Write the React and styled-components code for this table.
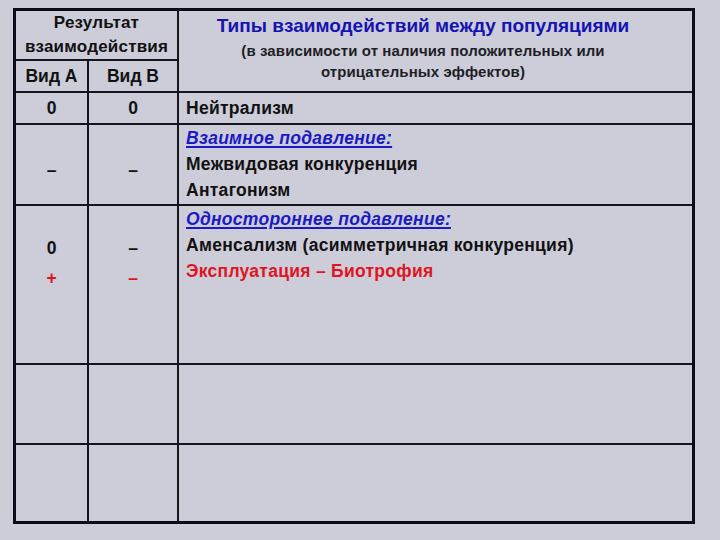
import React from "react";
import styled, { createGlobalStyle } from "styled-components";

const Global = createGlobalStyle`
  html, body {
    margin: 0;
    padding: 0;
    background: #cdccd9;
  }
  body {
    font-family: "Liberation Sans", Arial, sans-serif;
    color: #111;
  }
`;

const Page = styled.div`
  width: 720px;
  height: 540px;
  box-sizing: border-box;
  padding: 8px 0 0 13px;
  background: #cdccd9;
`;

const Table = styled.div`
  box-sizing: border-box;
  width: 682px;
  display: grid;
  grid-template-columns: 71px 88px 1fr;
  grid-template-rows: 48px 30px 30px 79px 157px 78px 76px;
  gap: 2px;
  background: #15151c;
  border: 3px solid #0b0b1c;
`;

const Cell = styled.div`
  background: #cdccd9;
  box-sizing: border-box;
  grid-column: ${(p) => p.$col || "auto"};
  grid-row: ${(p) => p.$row || "auto"};
  display: flex;
  flex-direction: column;
  align-items: ${(p) => (p.$left ? "flex-start" : "center")};
  justify-content: ${(p) => (p.$middle ? "center" : "flex-start")};
  padding: ${(p) => p.$pad || "0"};
  font-weight: bold;
  font-size: 17.5px;
  white-space: nowrap;
`;

const HeadLine = styled.div`
  line-height: 24px;
  font-size: 17px;
  letter-spacing: 0.2px;
  text-align: center;
`;

const Title = styled.div`
  color: #1414b0;
  font-size: 19px;
  line-height: 28px;
  text-align: center;
`;

const Subtitle = styled.div`
  color: #1e1e26;
  font-size: 15px;
  letter-spacing: 0.1px;
  line-height: 21px;
  text-align: center;
`;

const Symbol = styled.div`
  line-height: 30px;
  font-size: 17.5px;
  color: ${(p) => (p.$red ? "#e0141e" : "#111")};
`;

const Text = styled.div`
  line-height: 26px;
  letter-spacing: 0.28px;
  color: ${(p) => p.$color || "#111"};
  font-style: ${(p) => (p.$italic ? "italic" : "normal")};
  text-decoration: ${(p) => (p.$underline ? "underline" : "none")};
  text-decoration-thickness: 1.5px;
  text-underline-offset: 2px;
`;

const BLUE = "#1a1ac4";
const RED = "#e0141e";

export default function App() {
  return (
    <>
      <Global />
      <Page>
        <Table>
          <Cell $col="1 / 3" $row="1">
            <HeadLine>Результат</HeadLine>
            <HeadLine>взаимодействия</HeadLine>
          </Cell>
          <Cell $col="3" $row="1 / 3" $pad="1px 25px 0 0">
            <Title>Типы взаимодействий между популяциями</Title>
            <Subtitle>(в зависимости от наличия положительных или</Subtitle>
            <Subtitle>отрицательных эффектов)</Subtitle>
          </Cell>
          <Cell $col="1" $row="2" $middle>
            <Symbol>Вид А</Symbol>
          </Cell>
          <Cell $col="2" $row="2" $middle>
            <Symbol>Вид В</Symbol>
          </Cell>

          <Cell $middle>
            <Symbol>0</Symbol>
          </Cell>
          <Cell $middle>
            <Symbol>0</Symbol>
          </Cell>
          <Cell $left $middle $pad="0 0 0 7px">
            <Text>Нейтрализм</Text>
          </Cell>

          <Cell $pad="30px 0 0 0">
            <Symbol>–</Symbol>
          </Cell>
          <Cell $pad="30px 0 0 0">
            <Symbol>–</Symbol>
          </Cell>
          <Cell $left $pad="0 0 0 7px">
            <Text $color={BLUE} $italic $underline>
              Взаимное подавление:
            </Text>
            <Text>Межвидовая конкуренция</Text>
            <Text>Антагонизм</Text>
          </Cell>

          <Cell $pad="27px 0 0 0">
            <Symbol>0</Symbol>
            <Symbol $red>+</Symbol>
          </Cell>
          <Cell $pad="27px 0 0 0">
            <Symbol>–</Symbol>
            <Symbol $red>–</Symbol>
          </Cell>
          <Cell $left $pad="0 0 0 7px">
            <Text $color={BLUE} $italic $underline>
              Одностороннее подавление:
            </Text>
            <Text>Аменсализм (асимметричная конкуренция)</Text>
            <Text $color={RED}>Эксплуатация – Биотрофия</Text>
          </Cell>

          <Cell />
          <Cell />
          <Cell />

          <Cell />
          <Cell />
          <Cell />
        </Table>
      </Page>
    </>
  );
}
